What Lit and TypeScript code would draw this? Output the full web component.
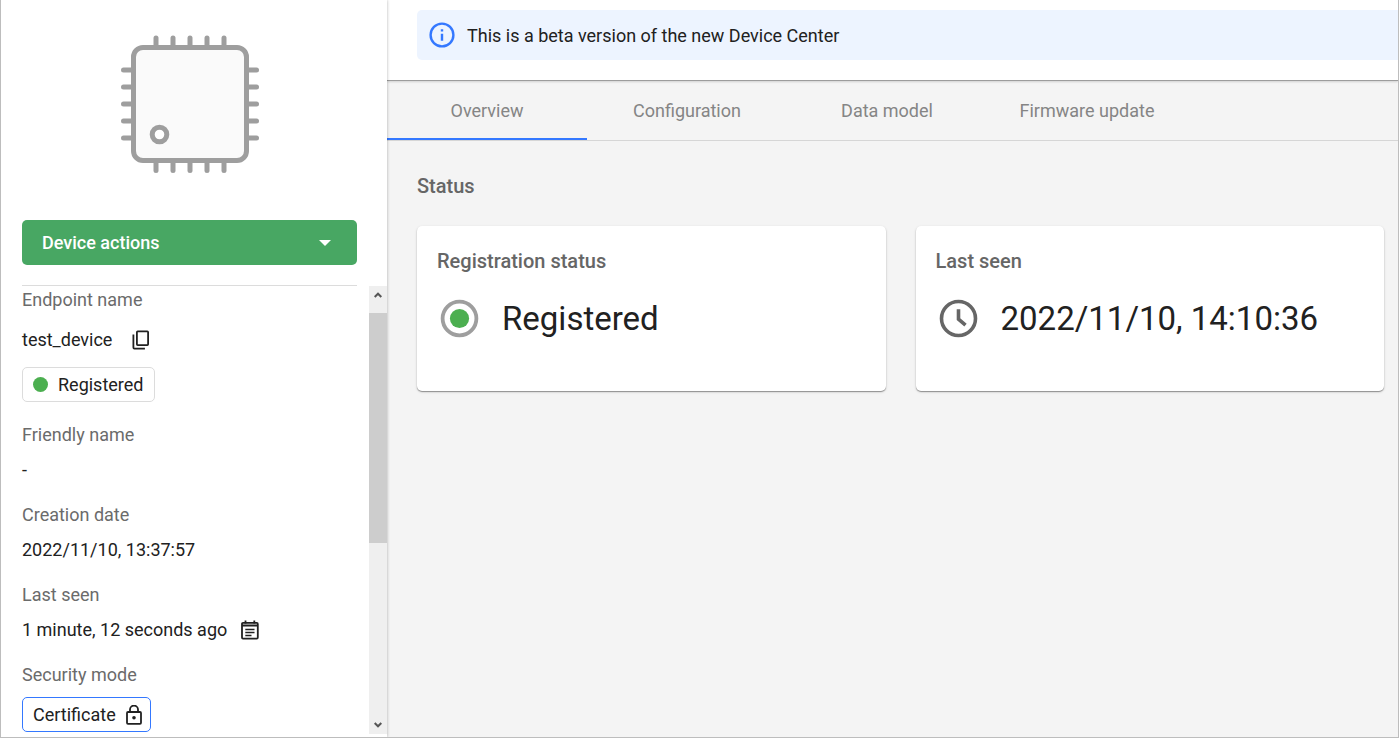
import { LitElement, html, css, svg } from "lit";
import { customElement, state } from "lit/decorators.js";

const PIN_OFFSETS = [35, 52, 69, 86, 103];

@customElement("app-root")
export class AppRoot extends LitElement {
  @state() private tab = "Overview";

  private tabs = ["Overview", "Configuration", "Data model", "Firmware update"];

  static styles = css`
    * { box-sizing: border-box; }
    :host {
      display: flex;
      height: 100vh;
      border: solid #bdbdbd;
      border-width: 0 1px 1px;
      background: #f4f4f4;
      color: #212121;
      font: 18px/25px Roboto, sans-serif;
      overflow: hidden;
      box-sizing: border-box;
    }
    h2, h3, p, dl, dd, dt { margin: 0; font-weight: 400; }
    button { font: inherit; color: inherit; border: 0; background: none; padding: 0; cursor: pointer; }
    svg { display: block; flex: none; }
    .sidebar {
      flex: none;
      width: 386px;
      display: flex;
      flex-direction: column;
      background: #fff;
      box-shadow: 0 0 3px rgba(0, 0, 0, 0.3);
      z-index: 1;
    }
    .picture { display: flex; justify-content: center; padding: 35px 30px 47px 22px; }
    .actions {
      display: flex;
      align-items: center;
      justify-content: space-between;
      height: 45px;
      margin: 0 30px 0 21px;
      padding: 0 26px 0 20px;
      border-radius: 5px;
      background: #48a763;
      color: #fff;
      font-weight: 500;
    }
    .divider { border-top: 1px solid #dcdcdc; margin: 20px 30px 0 21px; }
    .scroll { flex: 1; min-height: 0; display: flex; margin-bottom: 3px; }
    .details {
      flex: 1;
      overflow: hidden;
      display: flex;
      flex-direction: column;
      gap: 20px;
      padding: 1px 0 0 21px;
    }
    .field { display: flex; flex-direction: column; align-items: flex-start; gap: 10px; }
    .field dt { color: #6b6b6b; }
    .value { display: flex; align-items: center; gap: 14px; }
    .endpoint { height: 35px; gap: 20px; }
    .chip {
      display: flex;
      align-items: center;
      height: 35px;
      padding: 0 11px 0 10px;
      gap: 10px;
      border: 1px solid #dcdcdc;
      border-radius: 5px;
    }
    .dot { width: 15px; height: 15px; border-radius: 50%; background: #4caf50; }
    .secure { border-color: #3478ff; padding-right: 8px; }
    .scrollbar { width: 18px; background: #efefef; display: flex; flex-direction: column; }
    .arrow { height: 18px; display: grid; place-items: center; }
    .track { flex: 1; padding-top: 9px; }
    .thumb { height: 57%; background: #cdcdcd; }
    main { flex: 1; min-width: 0; }
    .top {
      background: #fff;
      padding: 10px 0 20px 30px;
      border-bottom: 1px solid #9c9c9c;
      box-shadow: 0 1px 2px rgba(0, 0, 0, 0.15);
    }
    .notice {
      display: flex;
      align-items: center;
      gap: 10px;
      height: 50px;
      padding-left: 10px;
      border-radius: 5px 0 0 5px;
      background: #edf4ff;
    }
    .tabs { display: flex; border-bottom: 1px solid #d6d6d6; }
    .tab {
      flex: 0 1 200px;
      height: 59px;
      padding-top: 2px;
      color: #858585;
      border-bottom: 2px solid transparent;
    }
    .active { border-color: #3478ff; }
    .content { padding: 33px 14px 30px 30px; }
    .content h2, .content h3 { font-size: 20px; font-weight: 500; color: #666; }
    .cards { display: grid; grid-template-columns: 1fr 1fr; gap: 30px; margin-top: 27px; }
    .card {
      height: 165px;
      padding: 23px 20px;
      border-radius: 5px;
      background: #fff;
      box-shadow: 0 1px 1px rgba(0, 0, 0, 0.35), 0 1px 3px rgba(0, 0, 0, 0.14);
    }
    .reading { display: flex; align-items: center; gap: 20px; margin-top: 22px; font-size: 33px; line-height: 45px; }
  `;

  private chipPicture() {
    return html`<svg width="138" height="138" viewBox="0 0 138 138" role="img" aria-label="Device">
      <g stroke="#9e9e9e" stroke-width="5" stroke-linecap="round">
        ${PIN_OFFSETS.map(
          (p) => svg`
            <line x1=${p} y1="3" x2=${p} y2="12"></line>
            <line x1=${p} y1="126" x2=${p} y2="135.500"></line>
            <line x1="2.500" y1=${p} x2="12" y2=${p}></line>
            <line x1="126" y1=${p} x2="135.500" y2=${p}></line>`
        )}
      </g>
      <rect x="12.500" y="12.500" width="113" height="113" rx="9.500" fill="#fafafa" stroke="#9e9e9e" stroke-width="5"></rect>
      <circle cx="38.500" cy="99.500" r="7.300" fill="#fff" stroke="#9e9e9e" stroke-width="5"></circle>
    </svg>`;
  }

  render() {
    return html`
      <aside class="sidebar">
        <div class="picture">${this.chipPicture()}</div>
        <button class="actions">
          <span>Device actions</span>
          <svg width="12" height="6" viewBox="0 0 12 6" fill="#fff"><path d="M0 0h12L6 6z" /></svg>
        </button>
        <div class="divider"></div>
        <div class="scroll">
          <dl class="details">
            <div class="field">
              <dt>Endpoint name</dt>
              <dd class="value endpoint">
                test_device
                <button aria-label="Copy endpoint name">
                  <svg width="18" height="20" viewBox="0 0 18 20" fill="none" stroke="#212121" stroke-width="1.800">
                    <rect x="4.900" y="1.400" width="11.200" height="13.700" rx=".8" />
                    <path d="M1.400 4.500v13.100q0 1 1 1h10.500" />
                  </svg>
                </button>
              </dd>
              <dd class="chip"><span class="dot"></span>Registered</dd>
            </div>
            <div class="field"><dt>Friendly name</dt><dd>-</dd></div>
            <div class="field"><dt>Creation date</dt><dd>2022/11/10, 13:37:57</dd></div>
            <div class="field">
              <dt>Last seen</dt>
              <dd class="value">
                1 minute, 12 seconds ago
                <svg width="18" height="20" viewBox="0 0 18 20" fill="none" stroke="#212121" stroke-width="1.800">
                  <rect x="1" y="2.900" width="15.800" height="15.700" rx="1" />
                  <path d="M4.500 .5v3M13.300 .5v3M1 5.500h15.800" />
                  <path d="M4.300 9.500h9.200M4.300 12.500h9.200M4.300 15.500h6.200" stroke-width="1.400" />
                </svg>
              </dd>
            </div>
            <div class="field">
              <dt>Security mode</dt>
              <dd class="chip secure">
                Certificate
                <svg width="16" height="20" viewBox="0 0 16 20" fill="none" stroke="#212121" stroke-width="1.800">
                  <rect x="1" y="7" width="14" height="11.800" rx="1" />
                  <path d="M4 7V4.600a4 4 0 0 1 8 0V7" />
                  <circle cx="8" cy="12.800" r="1.800" fill="#212121" stroke="none" />
                </svg>
              </dd>
            </div>
          </dl>
          <div class="scrollbar">
            <button class="arrow" aria-label="Scroll up">
              <svg width="8" height="6" viewBox="0 0 8 6" fill="none" stroke="#555" stroke-width="2"><path d="M.7 5 4 1.700 7.300 5" /></svg>
            </button>
            <div class="track"><div class="thumb"></div></div>
            <button class="arrow" aria-label="Scroll down">
              <svg width="8" height="6" viewBox="0 0 8 6" fill="none" stroke="#555" stroke-width="2"><path d="M.7 1 4 4.300 7.300 1" /></svg>
            </button>
          </div>
        </div>
      </aside>
      <main>
        <header class="top">
          <div class="notice">
            <svg width="30" height="30" viewBox="0 0 30 30" fill="none" stroke="#3478ff" stroke-width="2.400">
              <circle cx="15" cy="15" r="11.400" />
              <path d="M15 13.700v7M15 9.200v2.300" />
            </svg>
            <p>This is a beta version of the new Device Center</p>
          </div>
        </header>
        <nav class="tabs" role="tablist">
          ${this.tabs.map(
            (t) => html`<button
              role="tab"
              class="tab ${t === this.tab ? "active" : ""}"
              aria-selected=${t === this.tab}
              @click=${() => (this.tab = t)}
            >${t}</button>`
          )}
        </nav>
        <section class="content">
          <h2>Status</h2>
          <div class="cards">
            <article class="card">
              <h3>Registration status</h3>
              <div class="reading">
                <svg width="45" height="45" viewBox="0 0 45 45">
                  <circle cx="22.500" cy="22.500" r="16.900" fill="none" stroke="#9e9e9e" stroke-width="3.800" />
                  <circle cx="22.500" cy="22.500" r="9.600" fill="#4caf50" />
                </svg>
                <span>Registered</span>
              </div>
            </article>
            <article class="card">
              <h3>Last seen</h3>
              <div class="reading">
                <svg width="45" height="45" viewBox="0 0 45 45" fill="none" stroke="#666" stroke-width="3.600">
                  <circle cx="22.500" cy="22.500" r="17" />
                  <path d="M22.500 13.200v10l7 6" />
                </svg>
                <span>2022/11/10, 14:10:36</span>
              </div>
            </article>
          </div>
        </section>
      </main>
    `;
  }
}
